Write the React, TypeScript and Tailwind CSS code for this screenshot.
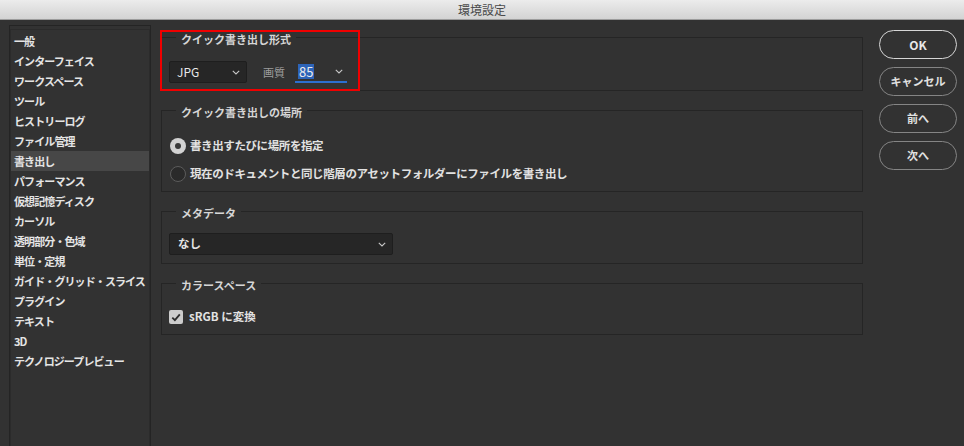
import React from "react";

const font = { fontFamily: '"Noto Sans CJK JP", "Noto Sans", "Liberation Sans", sans-serif' };

const items = [
  "一般",
  "インターフェイス",
  "ワークスペース",
  "ツール",
  "ヒストリーログ",
  "ファイル管理",
  "書き出し",
  "パフォーマンス",
  "仮想記憶ディスク",
  "カーソル",
  "透明部分・色域",
  "単位・定規",
  "ガイド・グリッド・スライス",
  "プラグイン",
  "テキスト",
  "3D",
  "テクノロジープレビュー",
];

function Chevron() {
  return (
    <svg width="8" height="5" viewBox="0 0 8 5" className="shrink-0">
      <path d="M0.8 0.8 L4 3.9 L7.2 0.8" fill="none" stroke="#c9c9c9" strokeWidth="1.1" />
    </svg>
  );
}

function Group({ title, children, className }: { title: string; children: React.ReactNode; className: string }) {
  return (
    <fieldset className={`border border-[#252525] ${className}`}>
      <legend className="ml-[14px] px-[5px] pt-[4px] text-[11px] leading-[14px] font-bold text-[#d6d6d6]">
        {title}
      </legend>
      {children}
    </fieldset>
  );
}

export default function App() {
  return (
    <div className="w-[964px] h-[446px] bg-[#323232] flex flex-col overflow-hidden" style={font}>
      <div className="h-[20px] shrink-0 bg-gradient-to-b from-[#ececec] to-[#d3d3d3] border-b border-[#9c9c9c] flex items-center justify-center text-[12px] text-[#4a4a4a]">
        環境設定
      </div>
      <div className="flex-1 flex relative">
        {/* Sidebar */}
        <div className="ml-[9px] mt-[5px] w-[142px] border-t border-x border-[#242424] flex flex-col">
          <div className="mt-[3px] flex-1 border-t border-x border-[#2b2b2b] pt-[1px]">
            {items.map((it) => (
              <div
                key={it}
                className={`h-[20px] flex items-center pl-[3px] text-[11px] font-bold tracking-[-0.9px] text-[#e4e4e4] whitespace-nowrap ${
                  it === "書き出し" ? "bg-[#474747]" : ""
                }`}
              >
                {it}
              </div>
            ))}
          </div>
        </div>

        {/* Main */}
        <div className="ml-[10px] w-[702px] pt-[8px] flex flex-col gap-[10px]">
          <Group title="クイック書き出し形式" className="pb-[7px]">
            <div className="mt-[15px] ml-[7px] flex items-center">
              <div className="w-[78px] h-[22px] bg-[#262626] border border-[#1e1e1e] rounded-[2px] flex items-center justify-between pl-[7px] pr-[6px]">
                <span className="text-[12px] text-[#e8e8e8]">JPG</span>
                <Chevron />
              </div>
              <span className="ml-[16px] text-[11px] text-[#9d9d9d]">画質</span>
              <div className="ml-[10px] w-[52px] h-[22px] border-b-2 border-[#2c6fd0] flex items-center justify-between pl-[3px] pr-[4px]">
                <span className="bg-[#2d64b8] text-[13px] leading-[15px] text-[#ececec] px-[1px]">85</span>
                <Chevron />
              </div>
            </div>
          </Group>

          <Group title="クイック書き出しの場所" className="pb-[7px]">
            <div className="mt-[17px] ml-[8px] flex flex-col gap-[8px]">
              <div className="h-[20px] flex items-center gap-[4px]">
                <span className="w-[16px] h-[16px] rounded-full bg-[#d2d2d2] flex items-center justify-center">
                  <span className="w-[6px] h-[6px] rounded-full bg-[#3a3a3a]" />
                </span>
                <span className="text-[11.5px] font-bold text-[#e2e2e2] tracking-[-0.4px]">書き出すたびに場所を指定</span>
              </div>
              <div className="h-[20px] flex items-center gap-[4px]">
                <span className="w-[16px] h-[16px] rounded-full bg-[#2a2a2a] border border-[#5c5c5c]" />
                <span className="text-[11.5px] font-bold text-[#e2e2e2] tracking-[-0.4px]">
                  現在のドキュメントと同じ階層のアセットフォルダーにファイルを書き出し
                </span>
              </div>
            </div>
          </Group>

          <Group title="メタデータ" className="pb-[8px]">
            <div className="mt-[13px] ml-[7px] w-[224px] h-[22px] bg-[#262626] border border-[#1e1e1e] rounded-[2px] flex items-center justify-between pl-[8px] pr-[6px]">
              <span className="text-[11.5px] font-bold text-[#e4e4e4]">なし</span>
              <Chevron />
            </div>
          </Group>

          <Group title="カラースペース" className="pb-[8px]">
            <div className="mt-[16px] ml-[7px] h-[18px] flex items-center gap-[6px]">
              <span className="w-[14px] h-[14px] rounded-[2px] bg-[#cccccc] flex items-center justify-center">
                <svg width="10" height="9" viewBox="0 0 10 9">
                  <path d="M1.3 4.6 L3.9 7.2 L8.8 1.4" fill="none" stroke="#2c2c2c" strokeWidth="1.8" />
                </svg>
              </span>
              <span className="text-[11.5px] font-bold text-[#e2e2e2]">sRGB に変換</span>
            </div>
          </Group>
        </div>

        {/* Buttons */}
        <div className="ml-[16px] pt-[10px] flex flex-col gap-[8px]">
          <button className="w-[78px] h-[29px] rounded-full border-[1.5px] border-[#d6d6d6] text-[12px] font-bold text-[#e8e8e8]">
            OK
          </button>
          <button className="w-[78px] h-[29px] rounded-full border border-[#858585] text-[11px] font-bold text-[#e2e2e2]">
            キャンセル
          </button>
          <button className="w-[78px] h-[29px] rounded-full border border-[#858585] text-[11px] font-bold text-[#e2e2e2]">
            前へ
          </button>
          <button className="w-[78px] h-[29px] rounded-full border border-[#858585] text-[11px] font-bold text-[#e2e2e2]">
            次へ
          </button>
        </div>

        {/* Red annotation */}
        <div className="absolute left-[160px] top-[10px] w-[200px] h-[61px] border-2 border-[#f00000] pointer-events-none" />
      </div>
    </div>
  );
}
